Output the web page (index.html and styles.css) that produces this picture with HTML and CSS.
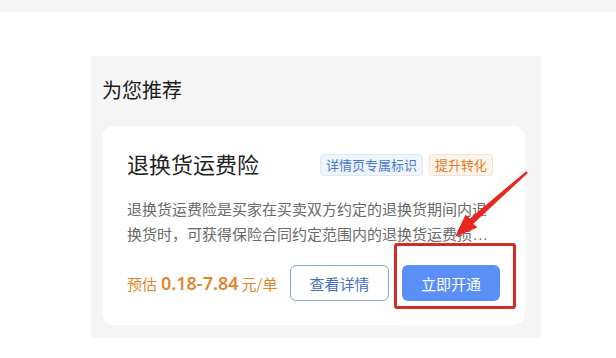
FILE: index.html
```html
<!DOCTYPE html>
<html lang="zh-CN">
<head>
<meta charset="utf-8">
<title>为您推荐</title>
<link rel="stylesheet" href="styles.css">
</head>
<body>
<div class="topbar"></div>
<section class="panel">
  <h2 class="panel-title">为您推荐</h2>
  <div class="card">
    <div class="card-head">
      <h3 class="card-title">退换货运费险</h3>
      <div class="tags">
        <span class="tag tag-blue">详情页专属标识</span>
        <span class="tag tag-orange">提升转化</span>
      </div>
    </div>
    <p class="desc">退换货运费险是买家在买卖双方约定的退换货期间内退换货时，可获得保险合同约定范围内的退换货运费损<span class="dots">...</span></p>
    <div class="card-foot">
      <div class="price"><span class="price-label">预估</span><span class="price-num">0.18-7.84</span><span class="price-unit">元/单</span></div>
      <div class="actions">
        <button class="btn btn-outline">查看详情</button>
        <button class="btn btn-primary">立即开通</button>
      </div>
    </div>
    <div class="highlight"></div>
  </div>
</section>
<svg class="arrow" width="616" height="358" viewBox="0 0 616 358">
  <polygon points="526.2,171.2 470,218.5 465.5,214.8 455,237 477.5,227.5 473.3,223.8 527.8,172.9" fill="#e8251f"/>
</svg>
</body>
</html>
```
FILE: styles.css
```css
* { box-sizing: border-box; }
html, body { margin: 0; padding: 0; background: #ffffff; }
body {
  width: 616px;
  height: 358px;
  position: relative;
  overflow: hidden;
  font-family: "Noto Sans CJK SC", "Noto Sans", sans-serif;
}
.topbar { height: 12px; background: #f5f5f5; }
.panel {
  margin: 44px 0 0 91px;
  width: 450px;
  height: 282px;
  background: #f5f5f5;
  padding: 20px 16px 13px 11px;
}
.panel-title {
  margin: 0;
  font-size: 20px;
  font-weight: 400;
  line-height: 28px;
  color: #1a1a1a;
}
.card {
  position: relative;
  margin-top: 22px;
  height: 199px;
  background: #ffffff;
  border-radius: 12px;
  padding: 22px 25px 24px 25px;
}
.card-head {
  display: flex;
  align-items: center;
  justify-content: space-between;
  height: 30px;
  padding-right: 7px;
}
.card-title {
  margin: 0;
  font-size: 22px;
  font-weight: 400;
  line-height: 30px;
  color: #1f1f1f;
}
.tags { display: flex; gap: 6px; margin-top: 3px; }
.tag {
  display: inline-flex;
  align-items: center;
  height: 22px;
  padding: 0 5px;
  font-size: 13px;
  border-radius: 4px;
  border: 1px solid;
}
.tag-blue { background: #eff4fd; border-color: #dde7f7; color: #4a78cf; }
.tag-orange { background: #fdf4ec; border-color: #f8e0cb; color: #e07a2a; }
.desc {
  margin: 18px 0 0 0;
  font-size: 15px;
  line-height: 25px;
  color: #6a6a6a;
  height: 50px;
  width: 366px;
}
.dots { font-family: "Liberation Sans", sans-serif; letter-spacing: 1px; margin-left: 1px; }
.card-foot {
  margin-top: 19px;
  display: flex;
  align-items: center;
  justify-content: space-between;
}
.price { color: #e3852c; font-size: 15px; white-space: nowrap; }
.price-num { font-size: 18px; font-weight: 600; margin: 0 3px 0 4px; font-family: "Noto Sans", "Open Sans", sans-serif; }
.actions { display: flex; gap: 13px; }
.btn {
  height: 36px;
  border-radius: 6px;
  font-family: "Noto Sans CJK SC", sans-serif;
  font-size: 15px;
  padding: 0;
  cursor: pointer;
}
.btn-outline { width: 99px; background: #ffffff; border: 1px solid #89a3cc; color: #3f6fc6; }
.btn-primary { width: 98px; background: #5b8ff8; border: none; color: #ffffff; }
.highlight {
  position: absolute;
  left: 292px;
  top: 117px;
  width: 122px;
  height: 66px;
  border: 3px solid #d52b24;
  border-radius: 3px;
}
.arrow { position: absolute; left: 0; top: 0; pointer-events: none; }
```
